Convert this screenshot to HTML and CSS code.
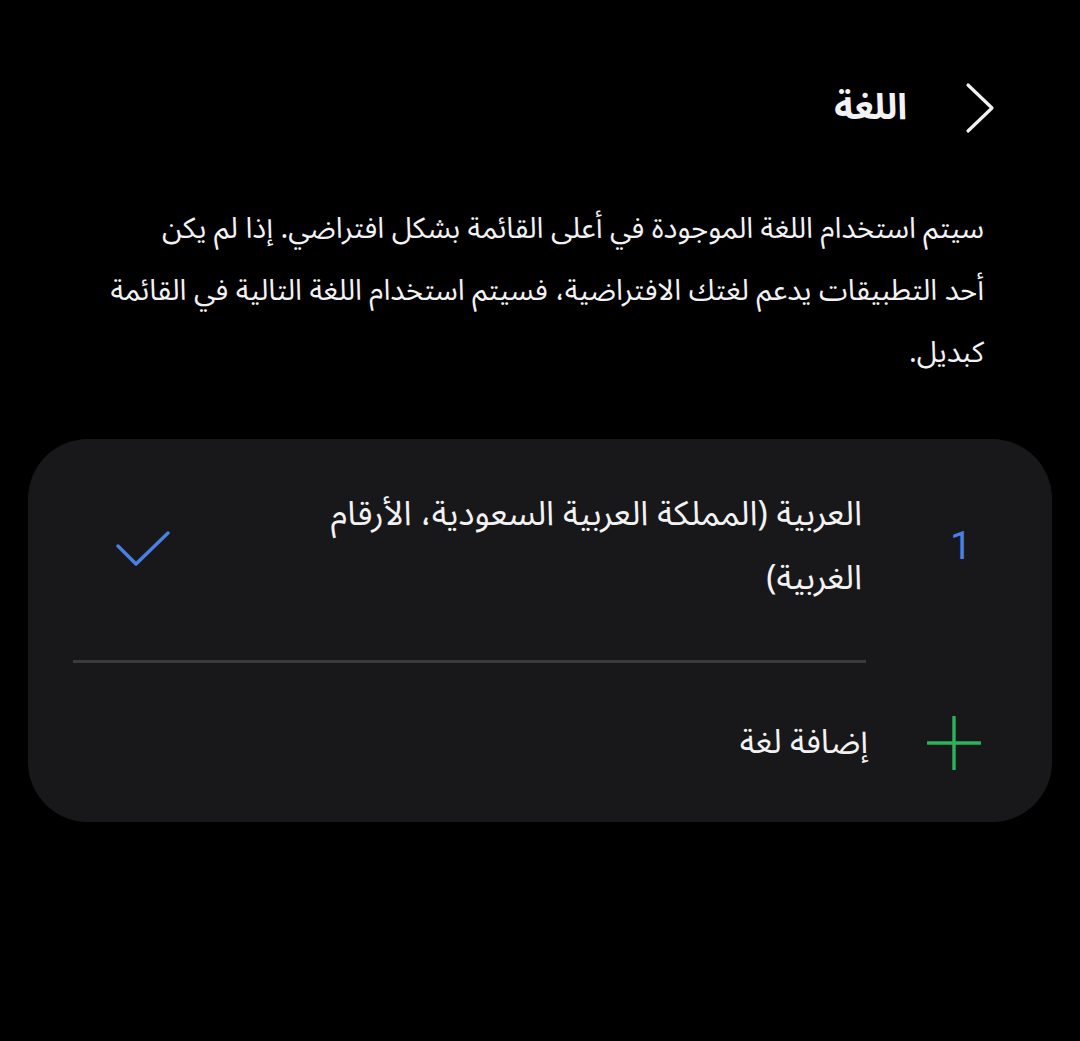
FILE: index.html
```html
<!DOCTYPE html>
<html lang="ar" dir="rtl">
<head>
    <meta charset="UTF-8">
    <meta name="viewport" content="width=device-width, initial-scale=1.0">
    <title>اللغة</title>
    <link rel="stylesheet" href="styles.css">
</head>
<body>
    <header class="top-bar">
        <button class="back-btn" aria-label="رجوع">
            <svg width="32" height="52" viewBox="0 0 32 52">
                <path d="M4 3 L28 26 L4 49" fill="none" stroke="#f2f2f2" stroke-width="3.2" stroke-linecap="round" stroke-linejoin="round"/>
            </svg>
        </button>
        <h1>اللغة</h1>
    </header>

    <p class="description">سيتم استخدام اللغة الموجودة في أعلى القائمة بشكل افتراضي. إذا لم يكن أحد&nbsp;التطبيقات يدعم لغتك الافتراضية، فسيتم استخدام اللغة التالية في القائمة كبديل.</p>

    <div class="card">
        <div class="row lang-row">
            <div class="lead num">1</div>
            <div class="label">العربية (المملكة العربية السعودية، الأرقام الغربية)</div>
            <div class="trail">
                <svg width="56" height="36" viewBox="0 0 56 36">
                    <path d="M3 15 L21 33 L53 2" fill="none" stroke="#4a7fe3" stroke-width="3.4" stroke-linecap="round" stroke-linejoin="round"/>
                </svg>
            </div>
        </div>
        <div class="divider"></div>
        <div class="row add-row">
            <div class="lead">
                <svg width="54" height="54" viewBox="0 0 54 54">
                    <path d="M27 1 V53 M1 27 H53" fill="none" stroke="#2ab35c" stroke-width="3.4" stroke-linecap="round"/>
                </svg>
            </div>
            <div class="label">إضافة لغة</div>
        </div>
    </div>
</body>
</html>
```

FILE: styles.css
```css
body {
    margin: 0;
    background: #000;
    color: #f2f2f2;
    font-family: "Noto Sans Arabic", "DejaVu Sans", sans-serif;
}
.top-bar {
    display: flex;
    align-items: center;
    gap: 57px;
    padding: 80px 84px 0 0;
    height: 56px;
}
.back-btn {
    background: none;
    border: none;
    padding: 0;
    width: 32px;
    height: 52px;
    display: flex;
}
h1 {
    margin: 0;
    font-size: 36px;
    font-weight: bold;
}
.description {
    margin: 62px 96px 0 92px;
    font-size: 29px;
    line-height: 62px;
}
.card {
    margin: 55px 28px 0;
    background: #18181a;
    border-radius: 60px;
    padding: 0 70px 0 45px;
}
.row {
    display: flex;
    align-items: center;
}
.lead {
    width: 56px;
    flex: none;
    display: flex;
    justify-content: center;
    margin-left: 54px;
}
.num {
    color: #4a7fe3;
    font-size: 39px;
    font-family: Roboto, "DejaVu Sans", sans-serif;
    justify-content: flex-start;
    padding-right: 10px;
}
.label {
    flex: 1;
    font-size: 33px;
    line-height: 64px;
}
.lang-row {
    padding: 43px 0 50px;
}
.lang-row .label {
    flex: none;
    width: 560px;
    font-size: 34px;
}
.trail {
    flex: 1;
    display: flex;
    justify-content: flex-end;
    padding-left: 42px;
    padding-top: 6px;
}
.divider {
    height: 3px;
    background: #3a3a3d;
    margin-right: 116px;
}
.add-row {
    height: 159px;
}
.add-row .label {
    padding-right: 4px;
}
```
